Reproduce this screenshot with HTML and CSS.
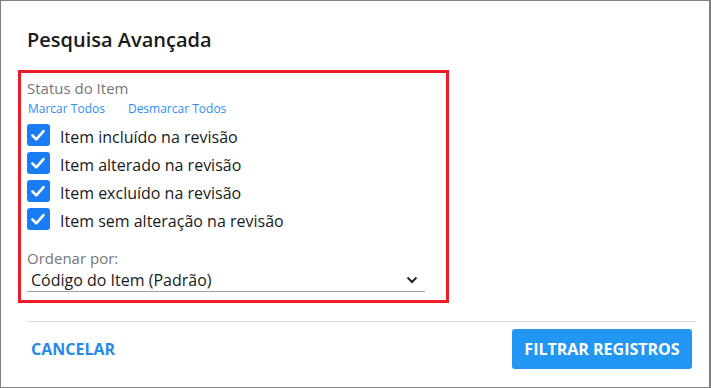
FILE: index.html
```html
<!DOCTYPE html>
<html lang="pt-BR">
<head>
  <meta charset="UTF-8">
  <title>Pesquisa Avançada</title>
  <link rel="stylesheet" href="styles.css">
</head>
<body>
  <div class="dialog">
    <h2 class="dialog-title">Pesquisa Avançada</h2>

    <!-- filtros -->
    <div class="filter-box">
      <div class="field-label">Status do Item</div>
      <div class="links">
        <a href="#">Marcar Todos</a>
        <a href="#">Desmarcar Todos</a>
      </div>

      <label class="check-row">
        <span class="check"><svg viewBox="0 0 22 22"><path d="M5.5 11.5l3.8 3.8 7.2-8.2"/></svg></span>
        <span class="check-text">Item incluído na revisão</span>
      </label>
      <label class="check-row">
        <span class="check"><svg viewBox="0 0 22 22"><path d="M5.5 11.5l3.8 3.8 7.2-8.2"/></svg></span>
        <span class="check-text">Item alterado na revisão</span>
      </label>
      <label class="check-row">
        <span class="check"><svg viewBox="0 0 22 22"><path d="M5.5 11.5l3.8 3.8 7.2-8.2"/></svg></span>
        <span class="check-text">Item excluído na revisão</span>
      </label>
      <label class="check-row">
        <span class="check"><svg viewBox="0 0 22 22"><path d="M5.5 11.5l3.8 3.8 7.2-8.2"/></svg></span>
        <span class="check-text">Item sem alteração na revisão</span>
      </label>

      <div class="field-label order-label">Ordenar por:</div>
      <div class="select">
        <span>Código do Item (Padrão)</span>
        <svg class="chevron" viewBox="0 0 12 8"><path d="M1.5 1.5l4.5 4.5 4.5-4.5"/></svg>
      </div>
    </div>

    <div class="divider"></div>

    <div class="dialog-footer">
      <a href="#" class="btn-link">CANCELAR</a>
      <button class="btn-primary">FILTRAR REGISTROS</button>
    </div>
  </div>
</body>
</html>
```

FILE: styles.css
```css
* {
  box-sizing: border-box;
}

html, body {
  margin: 0;
  padding: 0;
  background: #fff;
  font-family: 'Open Sans', 'Noto Sans', sans-serif;
  color: #1a1a1a;
}

.dialog {
  width: 711px;
  height: 388px;
  border: 1px solid #808080;
  border-right-width: 2px;
  overflow: hidden;
}

.dialog-title {
  margin: 25px 0 0 26px;
  font-size: 20px;
  line-height: 28px;
  font-weight: 600;
}

.filter-box {
  margin: 16px 0 0 17px;
  width: 431px;
  height: 233px;
  border: 3px solid #ed1c24;
  padding: 5px 0 0 6px;
}

.field-label {
  font-size: 15px;
  line-height: 20px;
  color: #767676;
}

.links {
  display: flex;
  gap: 23px;
  margin: 3px 0 4px 1px;
  font-size: 12px;
  line-height: 16px;
}

.links a {
  color: #2f8cf2;
  text-decoration: none;
}

.check-row {
  display: flex;
  align-items: flex-start;
  height: 28px;
}

.check {
  width: 23px;
  height: 22px;
  margin-top: 3px;
  border-radius: 3px;
  background: #1a7cf5;
  display: flex;
}

.check svg {
  width: 22px;
  height: 22px;
  fill: none;
  stroke: #fff;
  stroke-width: 2.6;
  stroke-linecap: round;
  stroke-linejoin: round;
}

.check-text {
  margin-left: 10px;
  padding-top: 2px;
  font-size: 16px;
  line-height: 28px;
  font-weight: 500;
}

.order-label {
  margin-top: 15px;
}

.select {
  display: flex;
  align-items: center;
  justify-content: space-between;
  width: 398px;
  margin-top: 1px;
  padding: 0 7px 0 4px;
  border-bottom: 1px solid #a0a0a0;
  font-size: 16px;
  line-height: 22px;
  font-weight: 500;
}

.chevron {
  width: 12px;
  height: 8px;
  fill: none;
  stroke: #222;
  stroke-width: 2;
}

.divider {
  margin: 18px 13px 0 26px;
  border-top: 1px solid #dedede;
}

.dialog-footer {
  display: flex;
  justify-content: space-between;
  align-items: center;
  padding: 7px 17px 0 30px;
}

.btn-link {
  color: #2888e6;
  font-size: 16px;
  font-weight: 700;
  font-stretch: 90%;
  text-decoration: none;
}

.btn-primary {
  width: 180px;
  height: 40px;
  border: none;
  border-radius: 3px;
  background: #2196f3;
  color: #fff;
  font-family: 'Open Sans', 'Noto Sans', sans-serif;
  font-size: 16px;
  font-weight: 700;
  font-stretch: 90%;
}
```
